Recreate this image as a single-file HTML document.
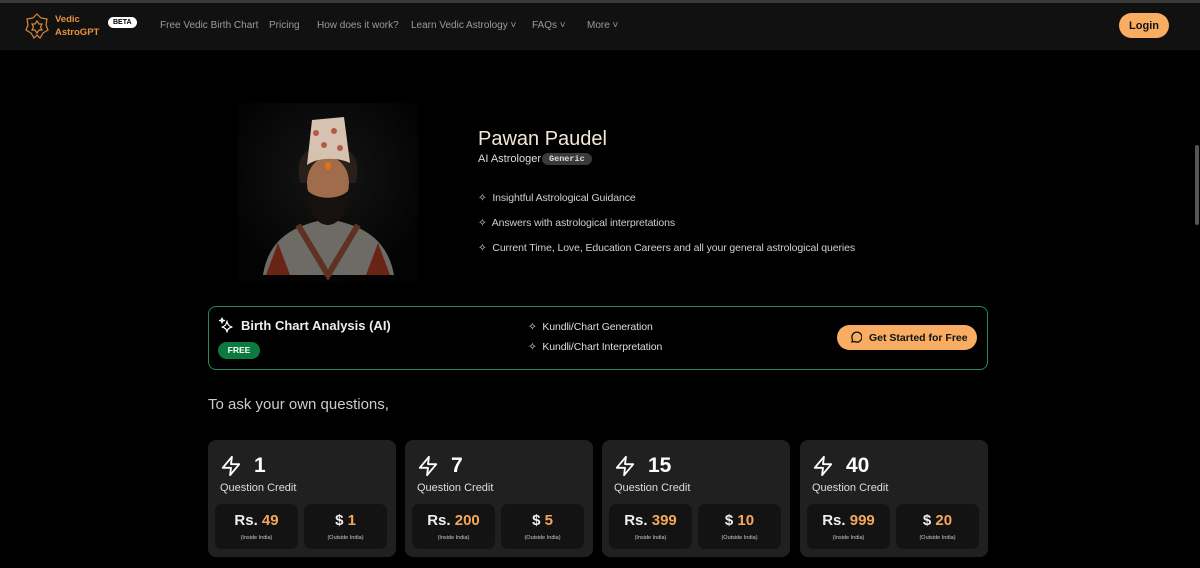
<!DOCTYPE html>
<html><head><meta charset="utf-8"><style>
*{margin:0;padding:0;box-sizing:border-box}
body{width:1200px;height:568px;overflow:hidden;background:#000;font-family:"Liberation Sans",sans-serif;color:#fff;position:relative}
.a{position:absolute}
.nav{left:0;top:0;width:1200px;height:50px;background:#111;border-top:3px solid #3a3a3a}
.nl{font-size:10px;color:#9a9a9a;top:20px}
.card{background:#202020;border-radius:8px;width:188px;height:117px;top:440px}
.card .n{left:46px;top:14px;font-size:21px;font-weight:bold}
.card .q{left:12px;top:42px;font-size:11px;color:#ddd}
.box{background:#131313;border-radius:7px;width:83px;height:45px;top:64px;text-align:center}
.box b{display:block;font-size:15px;margin-top:8px;color:#eee}
.box b span{color:#f5a65b}
.box i{display:block;font-style:normal;font-size:5.5px;color:#ccc;margin-top:6px}
.feat{font-size:10.5px;color:#cfcfcf;letter-spacing:-0.1px}
</style></head><body>
<div class="a nav"></div>
<svg class="a" style="left:25px;top:13px" width="24" height="26" viewBox="0 0 24 26"><g fill="none" stroke="#d88a3a" stroke-width="1.2"><polygon points="12,1 16,5 22,6 21,12 23,17 18,20 15,25 12,22 9,25 6,20 1,17 3,12 2,6 8,5"/><polygon points="12,8 14,11 17,11 15.5,14 17,17 14,17 12,20 10,17 7,17 8.5,14 7,11 10,11"/></g></svg>
<div class="a" style="left:55px;top:13px;font-size:9.5px;color:#e8913e;line-height:13px;font-weight:bold">Vedic<br>AstroGPT</div>
<div class="a" style="left:108px;top:17px;background:#fff;color:#000;font-size:7px;font-weight:bold;border-radius:7px;padding:2px 5px">BETA</div>
<div class="a nl" style="left:160px">Free Vedic Birth Chart</div>
<div class="a nl" style="left:269px">Pricing</div>
<div class="a nl" style="left:317px">How does it work?</div>
<div class="a nl" style="left:411px">Learn Vedic Astrology ˅</div>
<div class="a nl" style="left:532px">FAQs ˅</div>
<div class="a nl" style="left:587px">More ˅</div>
<div class="a" style="left:1119px;top:13px;width:50px;height:25px;background:#f9ad63;border-radius:13px;color:#111;font-size:11px;font-weight:bold;text-align:center;line-height:26px">Login</div>
<div class="a" style="left:1195px;top:145px;width:4px;height:80px;background:#555;border-radius:2px"></div>

<div class="a" style="left:238px;top:103px;width:180px;height:180px;background:#050505;overflow:hidden">
<svg width="180" height="180" viewBox="0 0 180 180">
<defs><radialGradient id="g" cx="50%" cy="40%" r="60%"><stop offset="0" stop-color="#151515"/><stop offset="1" stop-color="#030303"/></radialGradient></defs>
<rect width="180" height="180" fill="url(#g)"/>
<path d="M25 172 C30 140 50 125 80 118 L100 118 C130 125 150 140 156 172Z" fill="#6e6a66"/>
<path d="M60 122 L90 172 L120 122" fill="none" stroke="#5e3220" stroke-width="6"/>
<path d="M40 140 L52 172 L28 172Z M140 140 L128 172 L152 172Z" fill="#6a2416"/>
<path d="M62 80 C58 60 64 50 70 48 L110 48 C116 50 122 60 118 80Z" fill="#2a1e18"/>
<ellipse cx="90" cy="80" rx="21" ry="26" fill="#a06c4c"/>
<path d="M68 85 C70 118 85 122 90 122 C95 122 110 118 112 85 C105 98 75 98 68 85Z" fill="#16110f"/>
<path d="M69 62 L74 17 L106 14 L112 60 C100 54 80 54 69 62Z" fill="#d5c2b0"/>
<circle cx="78" cy="30" r="3" fill="#b55a44"/><circle cx="96" cy="28" r="3" fill="#b55a44"/><circle cx="86" cy="42" r="3" fill="#b55a44"/><circle cx="102" cy="45" r="3" fill="#b55a44"/>
<ellipse cx="90" cy="63" rx="3" ry="4" fill="#e0731a"/>
</svg></div>

<div class="a" style="left:478px;top:128px;font-size:20px;color:#f3e7d8">Pawan Paudel</div>
<div class="a" style="left:478px;top:153px;font-size:11px;color:#ddd">AI Astrologer</div>
<div class="a" style="left:542px;top:153px;background:#3a3a3a;border-radius:7px;padding:1px 7px;font-family:'Liberation Mono',monospace;font-size:8.5px;font-weight:bold;color:#ddd">Generic</div>
<div class="a feat" style="left:478px;top:192px">✧&nbsp; Insightful Astrological Guidance</div>
<div class="a feat" style="left:478px;top:217px">✧&nbsp; Answers with astrological interpretations</div>
<div class="a feat" style="left:478px;top:242px">✧&nbsp; Current Time, Love, Education Careers and all your general astrological queries</div>

<div class="a" style="left:208px;top:306px;width:780px;height:64px;border:1px solid #1f8a5a;border-radius:8px"></div>
<svg class="a" style="left:218px;top:317px" width="16" height="16" viewBox="0 0 16 16"><path d="M9 4 Q9.5 9 14 10 Q9.5 11 9 15 Q8.5 11 4 10 Q8.5 9 9 4Z M4 1 L4.6 3 L6.5 3.5 L4.6 4 L4 6 L3.4 4 L1.5 3.5 L3.4 3Z" fill="none" stroke="#fff" stroke-width="1.2" stroke-linejoin="round"/></svg>
<div class="a" style="left:241px;top:318px;font-size:13px;font-weight:bold;color:#eee">Birth Chart Analysis (AI)</div>
<div class="a" style="left:218px;top:342px;width:42px;height:17px;background:#0b7a3e;border-radius:9px;font-size:8.5px;font-weight:bold;text-align:center;line-height:17px">FREE</div>
<div class="a feat" style="left:528px;top:321px;color:#ddd">✧&nbsp; Kundli/Chart Generation</div>
<div class="a feat" style="left:528px;top:341px;color:#ddd">✧&nbsp; Kundli/Chart Interpretation</div>
<div class="a" style="left:837px;top:325px;width:140px;height:25px;background:#f9ad63;border-radius:13px;color:#111;font-size:10.5px;font-weight:bold;line-height:26px;padding-left:32px">Get Started for Free</div>
<svg class="a" style="left:849px;top:331px" width="13" height="13" viewBox="0 0 13 13"><path d="M3 11 L3.5 8.5 A5 5 0 1 1 5.5 10.5Z" fill="none" stroke="#111" stroke-width="1.3"/></svg>

<div class="a" style="left:208px;top:396px;font-size:15px;color:#ccc">To ask your own questions,</div>

<div class="a card" style="left:208px">
<svg class="a" style="left:12px;top:15px" width="22" height="22" viewBox="0 0 24 24"><path d="M13 2 L3 14 H12 L11 22 L21 10 H12 Z" fill="none" stroke="#fff" stroke-width="2" stroke-linejoin="round"/></svg>
<div class="a n">1</div><div class="a q">Question Credit</div>
<div class="a box" style="left:7px"><b>Rs. <span>49</span></b><i>(Inside India)</i></div>
<div class="a box" style="left:96px"><b>$ <span>1</span></b><i>(Outside India)</i></div></div>
<div class="a card" style="left:405px">
<svg class="a" style="left:12px;top:15px" width="22" height="22" viewBox="0 0 24 24"><path d="M13 2 L3 14 H12 L11 22 L21 10 H12 Z" fill="none" stroke="#fff" stroke-width="2" stroke-linejoin="round"/></svg>
<div class="a n">7</div><div class="a q">Question Credit</div>
<div class="a box" style="left:7px"><b>Rs. <span>200</span></b><i>(Inside India)</i></div>
<div class="a box" style="left:96px"><b>$ <span>5</span></b><i>(Outside India)</i></div></div>
<div class="a card" style="left:602px">
<svg class="a" style="left:12px;top:15px" width="22" height="22" viewBox="0 0 24 24"><path d="M13 2 L3 14 H12 L11 22 L21 10 H12 Z" fill="none" stroke="#fff" stroke-width="2" stroke-linejoin="round"/></svg>
<div class="a n">15</div><div class="a q">Question Credit</div>
<div class="a box" style="left:7px"><b>Rs. <span>399</span></b><i>(Inside India)</i></div>
<div class="a box" style="left:96px"><b>$ <span>10</span></b><i>(Outside India)</i></div></div>
<div class="a card" style="left:800px">
<svg class="a" style="left:12px;top:15px" width="22" height="22" viewBox="0 0 24 24"><path d="M13 2 L3 14 H12 L11 22 L21 10 H12 Z" fill="none" stroke="#fff" stroke-width="2" stroke-linejoin="round"/></svg>
<div class="a n">40</div><div class="a q">Question Credit</div>
<div class="a box" style="left:7px"><b>Rs. <span>999</span></b><i>(Inside India)</i></div>
<div class="a box" style="left:96px"><b>$ <span>20</span></b><i>(Outside India)</i></div></div>
</body></html>
